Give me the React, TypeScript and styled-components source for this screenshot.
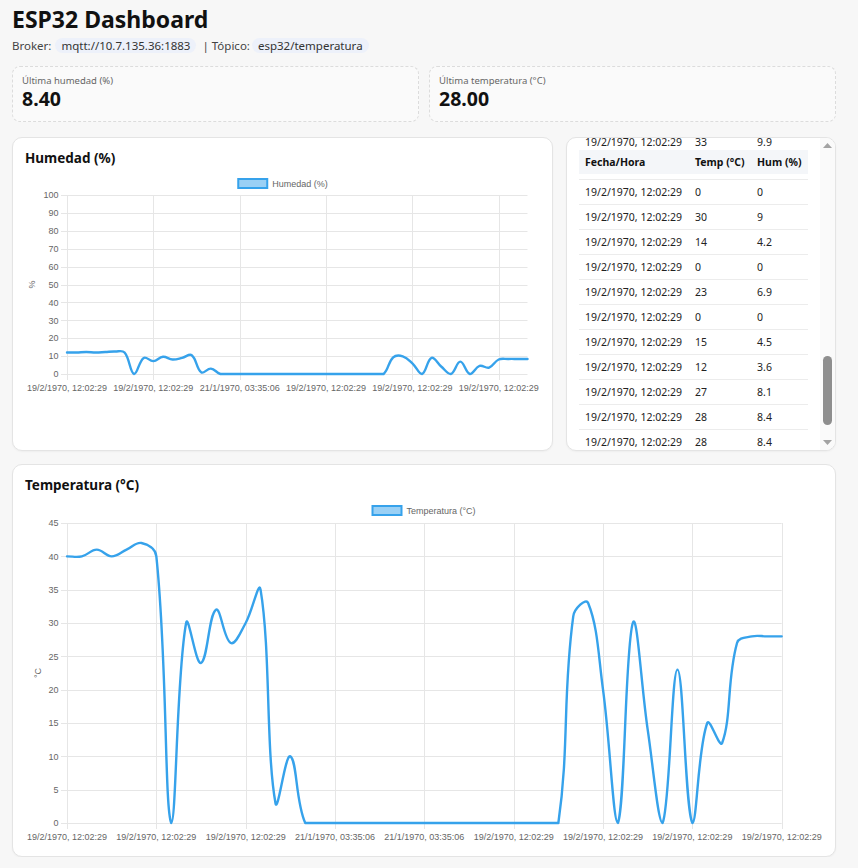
import React, { useLayoutEffect, useRef } from "react";
import styled, { createGlobalStyle } from "styled-components";

const GlobalStyle = createGlobalStyle`
  html, body { margin: 0; padding: 0; }
  body {
    background: #f7f7f7;
    font-family: "Noto Sans", "Open Sans", sans-serif;
    color: #111;
    overflow: hidden;
  }
`;

const Page = styled.div`
  width: 824px;
  padding: 6px 0 0 12px;
`;

const Title = styled.h1`
  margin: 0;
  font-size: 23px;
  line-height: 26px;
  font-weight: 700;
  color: #111;
`;

const SubLine = styled.div`
  margin-top: 6px;
  display: flex;
  align-items: center;
  gap: 4px;
  font-size: 11.5px;
  line-height: 15px;
  color: #444;
`;

const Pill = styled.span`
  display: inline-block;
  padding: 0 6px;
  border-radius: 8px;
  background: #edf1fa;
  color: #333;
`;

const Sep = styled.span`
  margin-left: 2px;
  margin-right: -2px;
`;

const StatsRow = styled.div`
  margin-top: 13px;
  display: grid;
  grid-template-columns: 1fr 1fr;
  gap: 10px;
`;

const StatCard = styled.div`
  box-sizing: border-box;
  height: 56px;
  padding: 8px 9px 10px;
  border: 1px dashed #dcdcdc;
  border-radius: 8px;
  background: #fafafa;
`;

const StatLabel = styled.div`
  font-size: 9.5px;
  line-height: 12px;
  color: #666;
`;

const StatValue = styled.div`
  font-size: 19.5px;
  line-height: 24px;
  font-weight: 700;
  color: #111;
`;

const TopRow = styled.div`
  margin-top: 15px;
  display: grid;
  grid-template-columns: 541px 1fr;
  gap: 13px;
  align-items: stretch;
`;

const Card = styled.div`
  box-sizing: border-box;
  background: #fff;
  border: 1px solid #e4e4e4;
  border-radius: 10px;
  padding: 12px;
  box-shadow: 0 1px 2px rgba(0, 0, 0, 0.04);
`;

const WideCard = styled(Card)`
  margin-top: 13px;
`;

const CardTitle = styled.h2`
  margin: 0 0 4px;
  font-size: 13.5px;
  line-height: 16px;
  font-weight: 700;
  color: #111;
`;

const TableCard = styled.div`
  box-sizing: border-box;
  height: 314px;
  display: flex;
  background: #fff;
  border: 1px solid #e4e4e4;
  border-radius: 10px;
  overflow: hidden;
  box-shadow: 0 1px 2px rgba(0, 0, 0, 0.04);
`;

const Viewport = styled.div`
  flex: 1;
  min-width: 0;
  padding: 12px 12px 13px;
  overflow: hidden;
`;

const ScrollBar = styled.div`
  width: 15px;
  flex: none;
  display: flex;
  flex-direction: column;
  background: #fafafa;
`;

const ArrowBox = styled.div`
  height: 15px;
  flex: none;
  display: flex;
  align-items: center;
  justify-content: center;
`;

const Track = styled.div`
  flex: 1;
  display: flex;
  flex-direction: column;
  align-items: center;
`;

const Thumb = styled.div`
  width: 9px;
  border-radius: 5px;
  background: #8e8e8e;
`;

const Table = styled.table`
  width: 100%;
  border-collapse: collapse;
  font-size: 10.5px;
  color: #222;
`;

const Th = styled.th`
  position: sticky;
  top: 0;
  background: #f4f6f9;
  height: 24px;
  padding: 0 6px;
  text-align: left;
  font-weight: 700;
  color: #111;
  white-space: nowrap;
`;

const Td = styled.td`
  height: 24px;
  padding: 0 6px;
  border-bottom: 1px solid #ececec;
  white-space: nowrap;
`;

const ChartSvg = styled.svg`
  display: block;
  font-family: "Liberation Sans", Arial, sans-serif;
`;

const temps = [
  40, 40, 41, 40, 41, 42, 40, 0, 30, 24, 32, 27, 30, 35, 3, 10, 0,
  0, 0, 0, 0, 0, 0, 0, 0, 0, 0, 0, 0, 0, 0, 0, 0, 0,
  31, 33, 20, 0, 30, 14, 0, 23, 0, 15, 12, 27, 28, 28, 28,
];
const hums = temps.map((t) => Math.round(t * 3) / 10);
const labels = temps.map((_, i) =>
  i >= 17 && i <= 25 ? "21/1/1970, 03:35:06" : "19/2/1970, 12:02:29"
);

type Pt = { x: number; y: number };

function splinePath(pts: Pt[], tension: number, top: number, bottom: number): string {
  const cps = pts.map((cur, i) => {
    const prev = pts[i - 1] ?? cur;
    const next = pts[i + 1] ?? cur;
    const d01 = Math.hypot(cur.x - prev.x, cur.y - prev.y);
    const d12 = Math.hypot(next.x - cur.x, next.y - cur.y);
    let s01 = d01 / (d01 + d12);
    let s12 = d12 / (d01 + d12);
    if (isNaN(s01)) s01 = 0;
    if (isNaN(s12)) s12 = 0;
    const fa = tension * s01;
    const fb = tension * s12;
    const clamp = (v: number) => Math.max(top, Math.min(bottom, v));
    return {
      p: { x: cur.x - fa * (next.x - prev.x), y: clamp(cur.y - fa * (next.y - prev.y)) },
      n: { x: cur.x + fb * (next.x - prev.x), y: clamp(cur.y + fb * (next.y - prev.y)) },
    };
  });
  let d = `M${pts[0].x.toFixed(2)},${pts[0].y.toFixed(2)}`;
  for (let i = 1; i < pts.length; i++) {
    const a = cps[i - 1].n;
    const b = cps[i].p;
    d += ` C${a.x.toFixed(2)},${a.y.toFixed(2)} ${b.x.toFixed(2)},${b.y.toFixed(2)} ${pts[i].x.toFixed(2)},${pts[i].y.toFixed(2)}`;
  }
  return d;
}

interface LineChartProps {
  width: number;
  height: number;
  l: number;
  t: number;
  r: number;
  b: number;
  values: number[];
  yMax: number;
  yStep: number;
  tickEvery: number;
  legend: string;
  legendTextW: number;
  yTitle: string;
  yTitleX: number;
  labelY: number;
}

const GRID = "#e6e6e6";
const BLUE = "#36a2eb";

function LineChart(p: LineChartProps) {
  const n = p.values.length;
  const xs = (i: number) => p.l + (i * (p.r - p.l)) / (n - 1);
  const ys = (v: number) => p.b - (v / p.yMax) * (p.b - p.t);
  const yTicks: number[] = [];
  for (let v = 0; v <= p.yMax + 1e-9; v += p.yStep) yTicks.push(v);
  const xTicks: number[] = [];
  for (let i = 0; i < n; i += p.tickEvery) xTicks.push(i);
  const pts = p.values.map((v, i) => ({ x: xs(i), y: ys(v) }));
  const legendTotal = 30 + 5 + p.legendTextW;
  const lx = p.width / 2 - legendTotal / 2;
  const midY = (p.t + p.b) / 2;
  return (
    <ChartSvg width={p.width} height={p.height} viewBox={`0 0 ${p.width} ${p.height}`}>
      <rect x={lx + 1} y={9} width={29} height={9} fill="rgba(54,162,235,0.5)" stroke={BLUE} strokeWidth={2} />
      <text x={lx + 35} y={16.5} fontSize={9} fill="#666">
        {p.legend}
      </text>
      {yTicks.map((v) => (
        <g key={`y${v}`}>
          <line x1={p.l - 6} x2={p.r} y1={Math.round(ys(v)) + 0.5} y2={Math.round(ys(v)) + 0.5} stroke={GRID} strokeWidth={1} />
          <text x={p.l - 8.5} y={ys(v) + 3.2} fontSize={9} fill="#666" textAnchor="end">
            {v}
          </text>
        </g>
      ))}
      {xTicks.map((i) => (
        <g key={`x${i}`}>
          <line x1={Math.round(xs(i)) + 0.5} x2={Math.round(xs(i)) + 0.5} y1={p.t} y2={p.b + 6} stroke={GRID} strokeWidth={1} />
          <text x={xs(i)} y={p.labelY} fontSize={9} fill="#666" textAnchor="middle">
            {labels[i]}
          </text>
        </g>
      ))}
      <text
        x={p.yTitleX}
        y={midY}
        fontSize={9}
        fill="#666"
        textAnchor="middle"
        dominantBaseline="central"
        transform={`rotate(-90 ${p.yTitleX} ${midY})`}
      >
        {p.yTitle}
      </text>
      <path d={splinePath(pts, 0.4, p.t, p.b)} fill="none" stroke={BLUE} strokeWidth={2.4} strokeLinejoin="round" strokeLinecap="round" />
    </ChartSvg>
  );
}

const SCROLL_TOP = 919;
const VIEW_H = 312;
const CONTENT_H = 12 + 24 + temps.length * 25 + 13;
const TRACK_H = VIEW_H - 30;
const THUMB_H = Math.round((TRACK_H * VIEW_H) / CONTENT_H);
const THUMB_TOP = Math.round((SCROLL_TOP / (CONTENT_H - VIEW_H)) * (TRACK_H - THUMB_H));

function Arrow({ up }: { up?: boolean }) {
  return (
    <ArrowBox>
      <svg width="9" height="5" viewBox="0 0 9 5">
        <path d={up ? "M0 5 L4.5 0 L9 5 Z" : "M0 0 L4.5 5 L9 0 Z"} fill="#a3a3a3" />
      </svg>
    </ArrowBox>
  );
}

function DataTable() {
  const ref = useRef<HTMLDivElement>(null);
  useLayoutEffect(() => {
    if (ref.current) ref.current.scrollTop = SCROLL_TOP;
  }, []);
  return (
    <TableCard>
      <Viewport ref={ref}>
        <Table>
          <thead>
            <tr>
              <Th>Fecha/Hora</Th>
              <Th>Temp (°C)</Th>
              <Th>Hum (%)</Th>
            </tr>
          </thead>
          <tbody>
            {temps.map((t, i) => (
              <tr key={i}>
                <Td>{labels[i]}</Td>
                <Td>{t}</Td>
                <Td>{hums[i]}</Td>
              </tr>
            ))}
          </tbody>
        </Table>
      </Viewport>
      <ScrollBar>
        <Arrow up />
        <Track>
          <Thumb style={{ marginTop: THUMB_TOP, height: THUMB_H }} />
        </Track>
        <Arrow />
      </ScrollBar>
    </TableCard>
  );
}

export default function App() {
  return (
    <>
      <GlobalStyle />
      <Page>
        <Title>ESP32 Dashboard</Title>
        <SubLine>
          <span>Broker:</span>
          <Pill>mqtt://10.7.135.36:1883</Pill>
          <Sep>| Tópico:</Sep>
          <Pill>esp32/temperatura</Pill>
        </SubLine>
        <StatsRow>
          <StatCard>
            <StatLabel>Última humedad (%)</StatLabel>
            <StatValue>8.40</StatValue>
          </StatCard>
          <StatCard>
            <StatLabel>Última temperatura (°C)</StatLabel>
            <StatValue>28.00</StatValue>
          </StatCard>
        </StatsRow>
        <TopRow>
          <Card>
            <CardTitle>Humedad (%)</CardTitle>
            <LineChart
              width={515}
              height={230}
              l={42}
              t={25}
              r={502.5}
              b={204}
              values={hums}
              yMax={100}
              yStep={10}
              tickEvery={9}
              legend="Humedad (%)"
              legendTextW={55.5}
              yTitle="%"
              yTitleX={7}
              labelY={220.5}
            />
          </Card>
          <DataTable />
        </TopRow>
        <WideCard>
          <CardTitle>Temperatura (°C)</CardTitle>
          <LineChart
            width={798}
            height={347}
            l={42}
            t={26}
            r={756.7}
            b={326}
            values={temps}
            yMax={45}
            yStep={5}
            tickEvery={6}
            legend="Temperatura (°C)"
            legendTextW={70}
            yTitle="°C"
            yTitleX={13}
            labelY={342.5}
          />
        </WideCard>
      </Page>
    </>
  );
}
